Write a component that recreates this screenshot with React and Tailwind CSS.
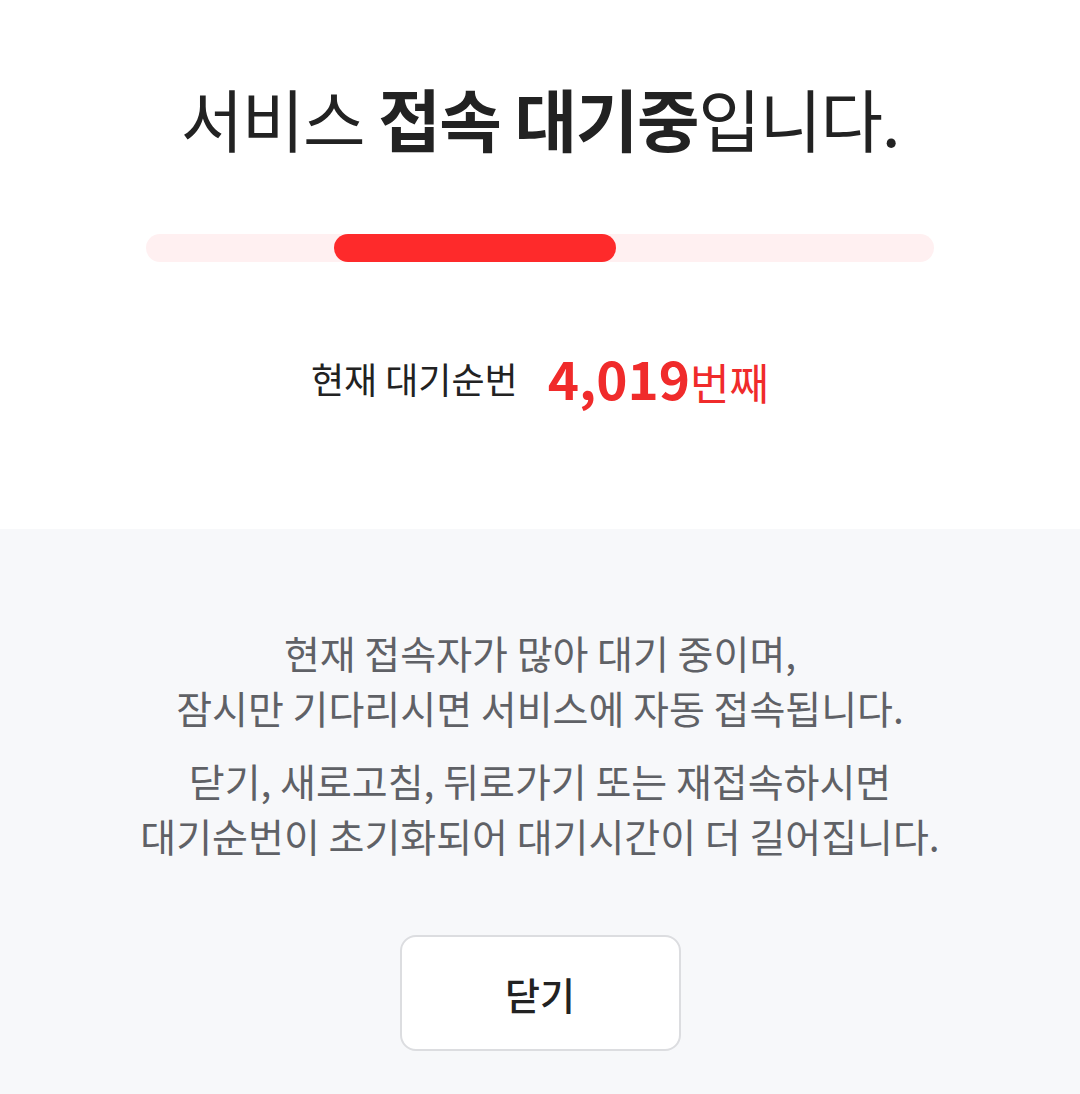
export default function App() {
  return (
    <div
      className="w-[1080px] h-[1094px] flex flex-col bg-white"
      style={{ fontFamily: '"Noto Sans CJK KR", "Noto Sans", sans-serif' }}
    >
      <section className="h-[529px] flex flex-col items-center bg-white">
        <h1 className="mt-[77px] h-[82px] leading-[82px] text-[68px] tracking-[-0.02em] text-[#222222] font-normal whitespace-nowrap">
          서비스 <span className="font-bold">접속 대기중</span>입니다.
        </h1>
        <div className="relative mt-[75px] w-[788px] h-[28px] rounded-full bg-[#fff0f1]">
          <div className="absolute left-[188px] top-0 h-[28px] w-[282px] rounded-full bg-[#fe2a2b]" />
        </div>
        <div className="mt-[88px] h-[56px] flex items-center gap-[30px] whitespace-nowrap">
          <span className="text-[36px] text-[#222222]">현재 대기순번</span>
          <span className="text-[#f02b2b] flex items-baseline">
            <span className="text-[53px] font-bold">4,019</span>
            <span className="text-[43px]">번째</span>
          </span>
        </div>
      </section>
      <section className="flex-1 flex flex-col items-center bg-[#f7f8fa]">
        <div className="mt-[96px] flex flex-col items-center gap-[18px] text-[39px] leading-[55px] text-[#5f6166] text-center whitespace-nowrap">
          <p>
            현재 접속자가 많아 대기 중이며,
            <br />
            잠시만 기다리시면 서비스에 자동 접속됩니다.
          </p>
          <p>
            닫기, 새로고침, 뒤로가기 또는 재접속하시면
            <br />
            대기순번이 초기화되어 대기시간이 더 길어집니다.
          </p>
        </div>
        <button className="mt-[72px] w-[281px] h-[116px] rounded-[16px] border-2 border-[#dcdde0] bg-white flex items-center justify-center text-[38px] text-[#222222] font-medium">
          닫기
        </button>
      </section>
    </div>
  );
}
